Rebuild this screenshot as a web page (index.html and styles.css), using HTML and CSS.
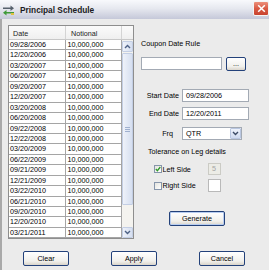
FILE: index.html
```html
<!DOCTYPE html>
<html lang="en">
<head>
    <meta charset="UTF-8">
    <meta name="viewport" content="width=device-width, initial-scale=1.0">
    <title>Principal Schedule</title>
    <link rel="stylesheet" href="styles.css">
</head>
<body>

    <div class="window">
        <div class="titlebar">
            <svg class="app-icon" width="13" height="11" viewBox="0 0 13 11">
                <path d="M1 2.5h7.5V0.5l3.5 2.8-3.5 2.8V4.1H1z" fill="#56606c"/>
                <path d="M12 6.9H4.5V5L1 7.8l3.5 2.8V8.5H12z" fill="#3f9a3a"/>
                <rect x="9" y="8" width="3" height="2" fill="#e0c040"/>
            </svg>
            <span class="title">Principal Schedule</span>
            <div class="close">
                <svg width="9" height="9" viewBox="0 0 9 9">
                    <path d="M1.2 1.2l6.6 6.6M7.8 1.2l-6.6 6.6" stroke="#fff" stroke-width="1.5"/>
                </svg>
            </div>
        </div>

        <div class="body">
            <div class="main">
                <!-- schedule list -->
                <div class="grid">
                    <div class="grid-head">
                        <div class="hcell col-date">Date</div>
                        <div class="hcell col-amt">Notional</div>
                        <div class="hcell col-fill"></div>
                    </div>
                    <div class="grid-body">
                        <div class="rows" id="rows"></div>
                        <div class="scroll">
                            <div class="sb-btn">
                                <svg width="7" height="5" viewBox="0 0 7 5"><path d="M1 4l2.5-2.5L6 4" fill="none" stroke="#4d6185" stroke-width="1.4"/></svg>
                            </div>
                            <div class="sb-thumb">
                                <svg width="5" height="5" viewBox="0 0 5 5"><path d="M0 0.5h5M0 2.5h5M0 4.5h5" stroke="#9fb0cf" stroke-width="1"/></svg>
                            </div>
                            <div class="sb-track"></div>
                            <div class="sb-btn">
                                <svg width="7" height="5" viewBox="0 0 7 5"><path d="M1 1l2.5 2.5L6 1" fill="none" stroke="#4d6185" stroke-width="1.4"/></svg>
                            </div>
                        </div>
                    </div>
                </div>

                <!-- right side options -->
                <div class="side">
                    <div class="coupon-label">Coupon Date Rule</div>
                    <div class="coupon-row">
                        <div class="textbox coupon-box"></div>
                        <button class="btn dots">...</button>
                    </div>

                    <div class="field first">
                        <span class="lbl">Start Date</span>
                        <div class="textbox date-box">09/28/2006</div>
                    </div>
                    <div class="field">
                        <span class="lbl">End Date</span>
                        <div class="textbox date-box">12/20/2011</div>
                    </div>
                    <div class="field frq">
                        <span class="lbl lbl-frq">Frq</span>
                        <div class="select">
                            <span class="select-text">QTR</span>
                            <span class="select-arrow">
                                <svg width="7" height="5" viewBox="0 0 7 5"><path d="M1 1l2.5 2.5L6 1" fill="none" stroke="#3b4a66" stroke-width="1.4"/></svg>
                            </span>
                        </div>
                    </div>

                    <div class="tolerance">Tolerance on Leg details</div>
                    <div class="check-row left">
                        <span class="checkbox checked">
                            <svg width="6" height="6" viewBox="0 0 6 6"><path d="M0.8 3l1.6 1.7L5.3 1" fill="none" stroke="#2f9a2a" stroke-width="1.3"/></svg>
                        </span>
                        <span class="check-label">Left Side</span>
                        <div class="small-box disabled">5</div>
                    </div>
                    <div class="check-row right">
                        <span class="checkbox"></span>
                        <span class="check-label">Right Side</span>
                        <div class="small-box"></div>
                    </div>

                    <button class="btn generate">Generate</button>
                </div>
            </div>

            <div class="actions">
                <button class="btn action">Clear</button>
                <button class="btn action">Apply</button>
                <button class="btn action">Cancel</button>
            </div>
        </div>
    </div>

    <script>
        // jadwal pokok: tanggal kupon
        const dates = [
            "09/28/2006", "12/20/2006", "03/20/2007", "06/20/2007", "09/20/2007",
            "12/20/2007", "03/20/2008", "06/20/2008", "09/22/2008", "12/22/2008",
            "03/20/2009", "06/22/2009", "09/21/2009", "12/21/2009", "03/22/2010",
            "06/21/2010", "09/20/2010", "12/20/2010", "03/21/2011"
        ];

        const rows = document.getElementById("rows");
        dates.forEach(function(d) {
            const row = document.createElement("div");
            row.className = "row";
            row.innerHTML = '<div class="cell col-date">' + d + '</div>' +
                            '<div class="cell col-amt">10,000,000</div>';
            rows.appendChild(row);
        });
    </script>

</body>
</html>
```

FILE: styles.css
```css
body {
    margin: 0;
    font-family: "Liberation Sans", Arial, sans-serif;
    font-size: 7.2px;
    color: #000;
}

.window {
    width: 269px;
    height: 270px;
    background: #ebebeb;
    display: flex;
    flex-direction: column;
    overflow: hidden;
}

/* title bar */
.titlebar {
    height: 19px;
    flex: none;
    display: flex;
    align-items: center;
    padding-left: 2px;
    background: linear-gradient(#f8f9fc, #e6e8ef 45%, #c5c8d9);
}

.app-icon {
    margin-top: 1px;
}

.title {
    font-weight: bold;
    font-size: 8.3px;
    margin-left: 5px;
    color: #1b1b22;
}

.close {
    align-self: flex-start;
    margin: 1px 0 0 auto;
    width: 16px;
    height: 15px;
    box-sizing: border-box;
    border: 1px solid #f4f4f4;
    border-radius: 2px;
    background: linear-gradient(#ec8f7b, #d95a44 50%, #c8432f);
    display: flex;
    align-items: center;
    justify-content: center;
}

/* dialog body */
.body {
    flex: 1;
    border-left: 2px solid #a9a9a9;
    padding: 6px 0 0 6px;
    display: flex;
    flex-direction: column;
}

.main {
    display: flex;
}

/* grid */
.grid {
    border: 1px solid #8e8e8e;
    background: #fff;
    display: flex;
    flex-direction: column;
}

.grid-head {
    display: flex;
    height: 13px;
    background: linear-gradient(#fbfbfb, #efefef);
    border-bottom: 1px solid #c8c8c8;
}

.hcell {
    box-sizing: border-box;
    padding: 3px 0 0 4px;
    color: #222;
    border-right: 1px solid #d4d4d4;
}

.grid-body {
    display: flex;
}

.col-date {
    width: 57px;
    box-sizing: border-box;
}

.col-amt {
    width: 56px;
    box-sizing: border-box;
}

.col-fill {
    width: 11px;
    border-right: none;
}

.hcell.col-amt {
    padding-left: 5px;
}

.row {
    display: flex;
    height: 10.45px;
    box-sizing: border-box;
    border-bottom: 1px solid #a5a5a5;
}

.cell {
    border-right: 1px solid #a5a5a5;
    padding: 1px 0 0 1px;
    line-height: 8px;
    white-space: nowrap;
}

.cell.col-amt {
    padding-left: 1.5px;
}

/* scrollbar */
.scroll {
    width: 11px;
    background: #f4f3ef;
    display: flex;
    flex-direction: column;
    padding-top: 1px;
}

.sb-btn, .sb-thumb {
    box-sizing: border-box;
    border: 1px solid #c3cee4;
    border-radius: 1px;
    background: linear-gradient(90deg, #eef2fa, #d6dff0);
    display: flex;
    align-items: center;
    justify-content: center;
}

.sb-btn {
    height: 11px;
}

.sb-thumb {
    height: 152px;
    margin-top: 1px;
}

.sb-track {
    flex: 1;
}

/* right side */
.side {
    padding-left: 7px;
    flex: 1;
}

.coupon-label {
    margin-top: 14px;
    line-height: 9px;
}

.coupon-row {
    display: flex;
    align-items: flex-start;
    margin-top: 9px;
}

.textbox {
    box-sizing: border-box;
    height: 13px;
    background: #fff;
    border: 1px solid #a3aab4;
    line-height: 11px;
    padding-left: 3px;
    white-space: nowrap;
}

.coupon-box {
    width: 81px;
}

.btn {
    box-sizing: border-box;
    font-family: "Liberation Sans", Arial, sans-serif;
    font-size: 7.2px;
    color: #000;
    padding: 0;
    border: 1px solid #23417a;
    border-radius: 2px;
    background: linear-gradient(#ffffff, #f1f0ec 70%, #d9d4ca);
}

.dots {
    width: 20px;
    height: 14px;
    margin-left: 4px;
    line-height: 8px;
}

.field {
    display: flex;
    align-items: center;
    margin-top: 5px;
}

.field.first {
    margin-top: 18px;
}

.field.frq {
    margin-top: 7px;
}

.lbl {
    width: 41px;
    padding-right: 3px;
    text-align: right;
    box-sizing: border-box;
}

.lbl-frq {
    padding-right: 9px;
}

.date-box {
    width: 67px;
}

.select {
    box-sizing: border-box;
    width: 60px;
    height: 13px;
    background: #fff;
    border: 1px solid #a3aab4;
    display: flex;
    align-items: center;
}

.select-text {
    flex: 1;
    padding-left: 3px;
}

.select-arrow {
    width: 11px;
    height: 11px;
    box-sizing: border-box;
    border: 1px solid #b9c6e0;
    border-radius: 1px;
    background: linear-gradient(#eef2fb, #cfdaf0);
    display: flex;
    align-items: center;
    justify-content: center;
}

.tolerance {
    margin-top: 7px;
    padding-left: 7px;
    line-height: 9px;
}

.check-row {
    display: flex;
    align-items: center;
    padding-left: 13px;
}

.check-row.left {
    margin-top: 7px;
}

.check-row.right {
    margin-top: 4px;
}

.checkbox {
    box-sizing: border-box;
    width: 8px;
    height: 8px;
    border: 1px solid #8796ab;
    background: linear-gradient(135deg, #e4e4de, #ffffff);
    display: flex;
    align-items: center;
    justify-content: center;
}

.check-label {
    width: 45px;
    padding-left: 0.5px;
}

.small-box {
    box-sizing: border-box;
    width: 13px;
    height: 12px;
    background: #fff;
    border: 1px solid #b9b9b9;
    text-align: center;
    line-height: 10px;
}

.check-row.right .small-box {
    height: 13px;
}

.small-box.disabled {
    background: #ecece6;
    border-color: #cbcbc5;
    color: #a3a3a3;
}

.generate {
    display: block;
    width: 56px;
    height: 15px;
    margin: 19px 0 0 28px;
    box-shadow: inset 0 0 0 1px #b8cdf0;
}

/* bottom buttons */
.actions {
    display: flex;
    gap: 42px;
    padding-left: 15px;
    margin-top: 12px;
}

.action {
    width: 46px;
    height: 15px;
}
```
